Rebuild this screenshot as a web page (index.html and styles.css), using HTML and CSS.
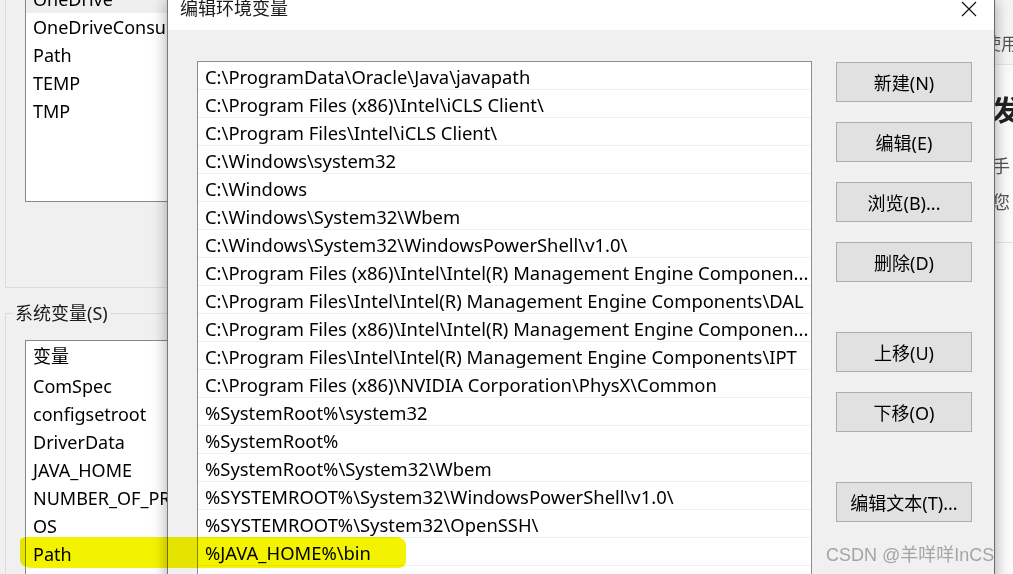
FILE: index.html
```html
<!DOCTYPE html>
<html lang="zh">
<head>
<meta charset="utf-8">
<title>编辑环境变量</title>
<link rel="stylesheet" href="styles.css">
</head>
<body>
<div class="desk">
  <div class="envwin">
    <div class="group g1">
      <div class="listbox lb1">
        <div class="vrow sel">OneDrive</div>
        <div class="vrow">OneDriveConsumer</div>
        <div class="vrow">Path</div>
        <div class="vrow">TEMP</div>
        <div class="vrow">TMP</div>
      </div>
    </div>
    <div class="group g2">
      <div class="glabel">系统变量(S)</div>
      <div class="listbox lb2">
        <div class="vrow head">变量</div>
        <div class="vrow">ComSpec</div>
        <div class="vrow">configsetroot</div>
        <div class="vrow">DriverData</div>
        <div class="vrow">JAVA_HOME</div>
        <div class="vrow">NUMBER_OF_PROCESSORS</div>
        <div class="vrow">OS</div>
        <div class="vrow">Path</div>
      </div>
    </div>
  </div>

  <div class="rightwin">
    <div class="rw-top"><span class="rw-t1">使用</span></div>
    <div class="rw-body">
      <div class="rw-big">发</div>
      <div class="rw-line">手</div>
      <div class="rw-line">您</div>
    </div>
    <div class="rw-sep"></div>
  </div>

  <div class="dialog">
    <div class="titlebar">
      <span class="title">编辑环境变量</span>
      <svg class="close" width="16" height="16" viewBox="0 0 16 16"><path d="M1 1 L15 15 M15 1 L1 15" stroke="#111" stroke-width="1.2" fill="none"/></svg>
    </div>
    <div class="dbody">
      <div class="pathlist">
        <div class="prow">C:\ProgramData\Oracle\Java\javapath</div>
        <div class="prow">C:\Program Files (x86)\Intel\iCLS Client\</div>
        <div class="prow">C:\Program Files\Intel\iCLS Client\</div>
        <div class="prow">C:\Windows\system32</div>
        <div class="prow">C:\Windows</div>
        <div class="prow">C:\Windows\System32\Wbem</div>
        <div class="prow">C:\Windows\System32\WindowsPowerShell\v1.0\</div>
        <div class="prow">C:\Program Files (x86)\Intel\Intel(R) Management Engine Componen...</div>
        <div class="prow">C:\Program Files\Intel\Intel(R) Management Engine Components\DAL</div>
        <div class="prow">C:\Program Files (x86)\Intel\Intel(R) Management Engine Componen...</div>
        <div class="prow">C:\Program Files\Intel\Intel(R) Management Engine Components\IPT</div>
        <div class="prow">C:\Program Files (x86)\NVIDIA Corporation\PhysX\Common</div>
        <div class="prow">%SystemRoot%\system32</div>
        <div class="prow">%SystemRoot%</div>
        <div class="prow">%SystemRoot%\System32\Wbem</div>
        <div class="prow">%SYSTEMROOT%\System32\WindowsPowerShell\v1.0\</div>
        <div class="prow">%SYSTEMROOT%\System32\OpenSSH\</div>
        <div class="prow">%JAVA_HOME%\bin</div>
        <div class="prow"></div>
      </div>
      <div class="btncol">
        <button class="btn">新建(N)</button>
        <button class="btn">编辑(E)</button>
        <button class="btn">浏览(B)...</button>
        <button class="btn">删除(D)</button>
        <button class="btn gap">上移(U)</button>
        <button class="btn">下移(O)</button>
        <button class="btn gap">编辑文本(T)...</button>
      </div>
    </div>
  </div>

  <div class="hl"></div>
  <div class="watermark">CSDN @羊咩咩InCS</div>
</div>
</body>
</html>
```

FILE: styles.css
```css
* { box-sizing: border-box; }
html, body { margin: 0; padding: 0; }
body {
  width: 1013px;
  height: 574px;
  overflow: hidden;
  background: #f0f0f0;
  font-family: "Noto Sans", "Noto Sans CJK SC", sans-serif;
  font-size: 18px;
  color: #000;
}
.desk {
  position: relative;
  width: 1013px;
  height: 574px;
  overflow: hidden;
}

/* left window: environment variables */
.envwin {
  position: absolute;
  left: 0;
  top: 0;
  width: 420px;
  height: 640px;
  padding-left: 5px;
  background: #f0f0f0;
}
.group {
  border: 1px solid #dcdcdc;
  padding-left: 19px;
}
.g1 {
  margin-top: -40px;
  padding-top: 23px;
  padding-bottom: 85px;
}
.g2 {
  margin-top: 25px;
  height: 320px;
}
.glabel {
  display: block;
  width: fit-content;
  margin-top: -13px;
  margin-left: -12px;
  padding: 0 2px;
  height: 24px;
  line-height: 24px;
  background: #f0f0f0;
  color: #1a1a1a;
}
.listbox {
  background: #fff;
  border: 1px solid #828790;
  overflow: hidden;
}
.lb1 { height: 218px; }
.lb2 { margin-top: 15px; height: 260px; }
.vrow {
  height: 28px;
  line-height: 28px;
  padding-left: 7px;
  white-space: nowrap;
}
.vrow.sel { background: #efefef; }
.vrow.head { height: 31px; line-height: 31px; }

/* right background window */
.rightwin {
  position: absolute;
  left: 940px;
  top: 0;
  width: 73px;
  height: 574px;
  background: #fbfbfb;
  color: #555;
}
.rw-top {
  height: 65px;
  border-bottom: 1px solid #e4e4e4;
  padding-top: 33px;
  padding-left: 44px;
  font-size: 17px;
  line-height: 22px;
  background: #f5f5f5;
  white-space: nowrap;
}
.rw-body { padding-left: 52px; white-space: nowrap; }
.rw-big {
  margin-top: 28px;
  font-size: 28px;
  line-height: 34px;
  font-weight: 700;
  color: #222;
}
.rw-line {
  font-size: 18px;
  line-height: 36px;
  color: #555;
}
.rw-body .rw-big + .rw-line { margin-top: 21px; }
.rw-sep {
  margin-top: 22px;
  border-bottom: 1px solid #e4e4e4;
}

/* dialog */
.dialog {
  position: absolute;
  left: 167px;
  top: 0;
  width: 828px;
  height: 620px;
  background: #f0f0f0;
  border-left: 1px solid #777;
  border-right: 1px solid #6a6a6a;
  box-shadow: 0 0 14px rgba(0, 0, 0, 0.35);
}
.titlebar {
  height: 30px;
  background: #fff;
  display: flex;
  align-items: flex-start;
  justify-content: space-between;
  padding-left: 12px;
  padding-right: 17px;
}
.title {
  line-height: 18px;
  margin-top: -1px;
  color: #1a1a1a;
}
.close { margin-top: 1px; }
.dbody {
  display: flex;
  align-items: flex-start;
  padding-top: 31px;
  padding-left: 29px;
}
.pathlist {
  width: 615px;
  height: 560px;
  background: #fff;
  border: 1px solid #8c8c8c;
  overflow: hidden;
  font-size: 18.4px;
}
.prow {
  height: 28px;
  line-height: 27px;
  padding-top: 1px;
  border-bottom: 1px solid #efefef;
  padding-left: 7px;
  white-space: nowrap;
  overflow: hidden;
}
.btncol {
  display: flex;
  flex-direction: column;
  gap: 20px;
  margin-left: 24px;
  padding-top: 1px;
}
.btn {
  width: 136px;
  height: 40px;
  background: #e1e1e1;
  border: 1px solid #adadad;
  font-family: inherit;
  font-size: 18px;
  color: #000;
  padding: 0;
}
.btn.gap { margin-top: 30px; }

/* marker highlight */
.hl {
  position: absolute;
  left: 20px;
  top: 537px;
  width: 386px;
  height: 31px;
  background: rgb(243, 243, 0);
  mix-blend-mode: multiply;
  border-radius: 6px 10px 8px 12px / 4px 8px 6px 8px;
}

.watermark {
  position: absolute;
  left: 826px;
  top: 543px;
  font-family: "Liberation Sans", "Noto Sans CJK SC", sans-serif;
  font-size: 18px;
  line-height: 24px;
  color: rgba(150, 150, 150, 0.85);
  white-space: nowrap;
}
```
